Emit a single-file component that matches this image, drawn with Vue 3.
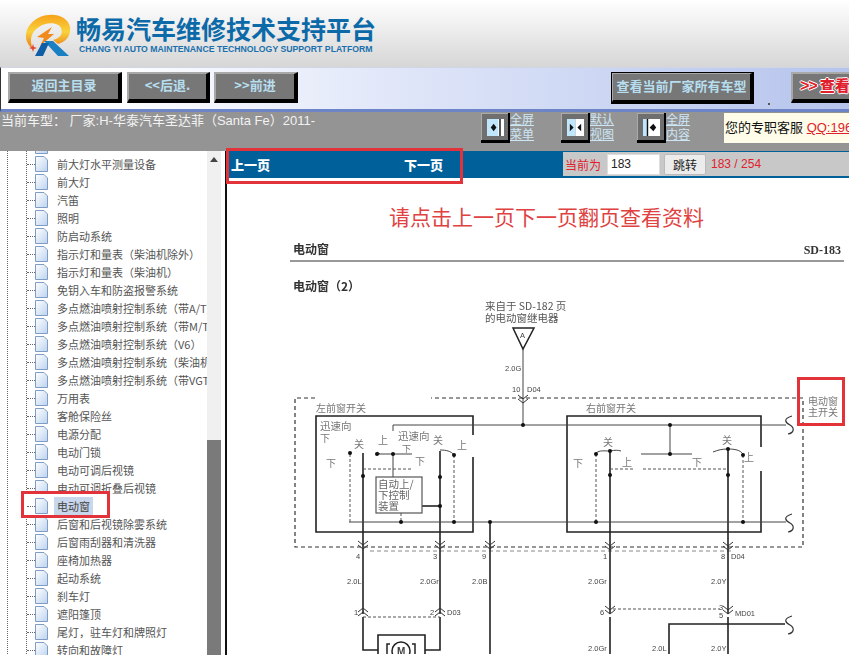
<script setup>
const treeRows = [
  '', '前大灯水平测量设备', '前大灯', '汽笛', '照明', '防启动系统', '指示灯和量表（柴油机除外）', '指示灯和量表（柴油机）',
  '免钥入车和防盗报警系统', '多点燃油喷射控制系统（带A/T）', '多点燃油喷射控制系统（带M/T）', '多点燃油喷射控制系统（V6）',
  '多点燃油喷射控制系统（柴油机）', '多点燃油喷射控制系统（带VGT）', '万用表', '客舱保险丝', '电源分配', '电动门锁',
  '电动可调后视镜', '电动可调折叠后视镜', '电动窗', '后窗和后视镜除雾系统', '后窗雨刮器和清洗器', '座椅加热器',
  '起动系统', '刹车灯', '遮阳篷顶', '尾灯，驻车灯和牌照灯', '转向和故障灯'
]
const thick = [
  'M473 436V417H316V533H473V458', 'M761 448V417H567V533H761V472',
  'M490 523V655', 'M363 454V615', 'M440 452V615', 'M610 452V615M610 618V655', 'M728 450V615M728 618V655',
  'M363 618V651H378', 'M440 618V651H425', 'M422 507H440', 'M669 655V625H785',
  'M378 655V636H425V655'
]
const thin = [
  'M523 350V426', 'M393 432V426H786', 'M349 523H786', 'M377 455H412', 'M393 455V478',
  'M641 455H692', 'M670 426V455', 'M440 451C446 451 451 452 454 456', 'M596 454C600 451 604 452 610 452',
  'M728 450C735 450 740 451 743 455', 'M713 453C718 451 722 450 728 450', 'M610 452C615 451 618 451 621 452',
  'M377 453L380 455'
]
const dashed = [
  'M350 455V523', 'M454 456V523', 'M401 514V523', 'M596 455V523', 'M743 456V523',
  'M363 470H412', 'M610 470H635', 'M643 470H727', 'M363 618H440', 'M613 610H720'
]
const nodes = [
  [523, 426], [670, 426], [363, 477], [393, 455], [350, 454], [377, 455], [440, 478], [440, 507], [401, 523], [454, 523],
  [454, 456], [490, 523], [610, 476], [596, 523], [670, 455], [728, 476], [743, 523], [610, 452], [596, 455], [728, 450], [743, 456]
]
const chevronsDown = [[523, 400, true], [363, 546], [440, 546], [490, 546], [610, 547], [728, 547], [610, 611], [728, 611]]
const chevronsUp = [[363, 613], [440, 613]]
const squiggles = [[787, 426], [787, 524], [787, 626]]
const cjkLabels = [
  ['左前窗开关', 316, 413, 10], ['右前窗开关', 586, 413, 10], ['迅速向', 320, 431, 10.5], ['下', 320, 443, 10],
  ['关', 354, 449, 10], ['上', 378, 445, 10], ['迅速向', 398, 441, 10.5], ['下', 402, 453, 9],
  ['关', 433, 445, 10], ['上', 457, 450, 10], ['下', 326, 468, 10], ['下', 415, 466, 10],
  ['关', 603, 447, 10], ['上', 622, 467, 10], ['下', 573, 468, 10], ['下', 692, 467, 10], ['关', 722, 445, 10], ['上', 744, 462, 10]
]
const latinLabels = [
  ['2.0G', 505, 372], ['10', 512, 393], ['D04', 527, 393], ['4', 356, 560], ['3', 433, 560], ['9', 482, 560],
  ['2.0L', 347, 585], ['2.0Gr', 420, 585], ['2.0B', 472, 585], ['1', 354, 616], ['2', 430, 616], ['D03', 447, 616],
  ['1', 603, 560], ['8', 721, 560], ['D04', 731, 560], ['2.0Gr', 588, 585], ['2.0Y', 711, 585], ['6', 600, 616],
  ['3', 719, 611], ['5', 719, 619], ['MD01', 735, 617], ['2.0Gr', 588, 652], ['2.0L', 652, 652], ['2.0Y', 711, 652]
]
</script>

<template>
  <div class="page">
    <header class="brand">
      <svg class="logo" viewBox="0 0 50 45" aria-hidden="true">
        <defs>
          <linearGradient id="ring" x1="0" y1="0" x2="0" y2="1">
            <stop offset="0" stop-color="#f7a21b" />
            <stop offset=".5" stop-color="#f9d23c" />
            <stop offset="1" stop-color="#e9771a" />
          </linearGradient>
        </defs>
        <path fill="url(#ring)" d="M8 36C-3 28-1 13 13 5C25-1 42 1 45 14C46 22 42 29 33 31L28 27C36 25 38 20 36 15C33 9 21 9 14 14C6 19 4 27 8 36Z" />
        <path fill="#f08a1d" d="M12 24L27 14L23 21L29 21L15 33L19 25Z" />
        <path fill="#1a80c4" d="M19 28L28 28L44 43L33 43Z" />
        <path fill="#0f5ea6" d="M10 43L17 30L24 30L18 43Z" />
        <path fill="#e2482a" d="M8 31L9 34L12 35L9 36L8 39L7 36L4 35L7 34Z" />
      </svg>
      <div class="brand-text">
        <div class="brand-cn">畅易汽车维修技术支持平台</div>
        <div class="brand-en">CHANG YI AUTO MAINTENANCE TECHNOLOGY SUPPORT PLATFORM</div>
      </div>
    </header>

    <nav class="nav">
      <button class="bevel b1">返回主目录</button>
      <button class="bevel b2">&lt;&lt;后退.</button>
      <button class="bevel b3">&gt;&gt;前进</button>
      <button class="bevel b4">查看当前厂家所有车型</button>
      <i class="speck"></i>
      <button class="bevel b5"><b class="arrows">&gt;&gt;</b><b>查看</b></button>
    </nav>

    <section class="status">
      <div class="model">当前车型： 厂家:H-华泰汽车圣达菲（Santa Fe）2011-</div>
      <div class="view v1">
        <span class="vicon"><svg viewBox="0 0 18 18"><rect width="18" height="18" fill="#bfe6fb" /><rect x="12" width="6" height="18" fill="#fff" /><rect x="13" width="1.5" height="18" fill="#111" /><path d="M7 5L4 9L7 13L10 9Z" fill="#111" /></svg></span>
        <a>全屏<br />菜单</a>
      </div>
      <div class="view v2">
        <span class="vicon"><svg viewBox="0 0 18 18"><rect width="9" height="18" fill="#bfe6fb" /><rect x="9" width="9" height="18" fill="#fff" /><path d="M3 5L7 9L3 13ZM15 5L11 9L15 13Z" fill="#111" /></svg></span>
        <a>默认<br />视图</a>
      </div>
      <div class="view v3">
        <span class="vicon"><svg viewBox="0 0 18 18"><rect width="18" height="18" fill="#fff" /><rect width="5" height="18" fill="#bfe6fb" /><rect x="4" width="1.5" height="18" fill="#111" /><path d="M11 5L7 9L11 13L14 9Z" fill="#111" /></svg></span>
        <a>全屏<br />内容</a>
      </div>
      <div class="service">您的专职客服 <a>QQ:1963</a></div>
    </section>

    <main class="body">
      <aside class="tree">
        <div class="tree-mark"></div>
        <div v-for="(row, i) in treeRows" :key="i" class="row" :class="{ active: row === '电动窗' }">
          <svg class="doc" viewBox="0 0 13 16" aria-hidden="true">
            <defs>
              <linearGradient id="docfill" x1="0" y1="0" x2="1" y2="1">
                <stop offset="0" stop-color="#ffffff" />
                <stop offset="1" stop-color="#bcd3ef" />
              </linearGradient>
            </defs>
            <path d="M.5.5H9L12.5 4V15.5H.5Z" fill="url(#docfill)" stroke="#7f9cc6" />
          </svg>
          <span class="label">{{ row }}</span>
        </div>
      </aside>
      <div class="scroll">
        <span class="arrow"></span>
        <span class="thumb"></span>
      </div>
      <div class="split"></div>

      <section class="content">
        <div class="pager">
          <div class="pager-links"><b>上一页</b><b>下一页</b></div>
          <div class="jump">
            <span class="red">当前为</span>
            <input class="page-input" value="183" />
            <button class="go">跳转</button>
            <span class="red count">183 / 254</span>
          </div>
        </div>
        <h1 class="notice">请点击上一页下一页翻页查看资料</h1>
        <svg class="diagram" viewBox="227 233 622 422" aria-label="电动窗电路图">
          <text class="head" x="293" y="255">电动窗</text>
          <text class="head latin" x="841" y="255" text-anchor="end">SD-183</text>
          <path d="M290 262H844" stroke="#333" stroke-width="1" />
          <text class="head" x="293" y="292">电动窗（2）</text>
          <text class="small" x="485" y="311">来自于 SD-182 页</text>
          <text class="small" x="485" y="323">的电动窗继电器</text>
          <path d="M513 329H534L523 350Z" fill="#fff" stroke="#222" stroke-width="1.5" />
          <text class="tiny" x="520" y="339">A</text>

          <path d="M315 399H295V548H803V399H431" fill="none" stroke="#333" stroke-width="1.2" stroke-dasharray="4 3" />
          <path d="M370 552H733" stroke="#888" stroke-width="1" stroke-dasharray="4 3" />

          <path v-for="d in thick" :key="d" :d="d" fill="none" stroke="#222" stroke-width="1.6" />
          <path v-for="d in thin" :key="d" :d="d" fill="none" stroke="#444" stroke-width="1" />
          <path v-for="d in dashed" :key="d" :d="d" fill="none" stroke="#555" stroke-width="1" stroke-dasharray="3 2" />
          <circle v-for="n in nodes" :key="n.join()" :cx="n[0]" :cy="n[1]" r="2" fill="#111" />

          <rect x="376" y="478" width="46" height="36" fill="#fff" stroke="#555" stroke-width="1.2" />
          <text class="box" x="378" y="489">自动上/</text>
          <text class="box" x="378" y="500">下控制</text>
          <text class="box" x="378" y="511">装置</text>

          <path v-for="c in chevronsDown" :key="'d' + c.join()" :d="`M${c[0] - 5} ${c[1] - 4}L${c[0]} ${c[1]}L${c[0] + 5} ${c[1] - 4}M${c[0] - 5} ${c[1]}L${c[0]} ${c[1] + 4}L${c[0] + 5} ${c[1]}`" fill="none" stroke="#333" />
          <path v-for="c in chevronsUp" :key="'u' + c.join()" :d="`M${c[0] - 5} ${c[1]}L${c[0]} ${c[1] - 4}L${c[0] + 5} ${c[1]}M${c[0] - 5} ${c[1] + 4}L${c[0]} ${c[1]}L${c[0] + 5} ${c[1] + 4}`" fill="none" stroke="#333" />
          <path v-for="s in squiggles" :key="'s' + s[1]" :d="`M${s[0] + 5} ${s[1] - 9}C${s[0] - 5} ${s[1] - 6} ${s[0] - 1} ${s[1] - 2} ${s[0] + 3} ${s[1]}C${s[0] + 8} ${s[1] + 3} ${s[0] + 7} ${s[1] + 8} ${s[0] + 1} ${s[1] + 9}`" fill="none" stroke="#333" stroke-width="1.2" />

          <text v-for="l in cjkLabels" :key="l.join()" class="lbl" :x="l[1]" :y="l[2]" :font-size="l[3]">{{ l[0] }}</text>
          <text v-for="l in latinLabels" :key="l.join()" class="tiny" :x="l[1]" :y="l[2]">{{ l[0] }}</text>

          <circle cx="401" cy="652" r="9" fill="#fff" stroke="#222" stroke-width="1.5" />
          <text class="tiny bold" x="397" y="656">M</text>
          <path d="M390 645H387V655M412 645H415V655" fill="none" stroke="#222" stroke-width="1.5" />

          <text class="lbl" x="808" y="406" font-size="10">电动窗</text>
          <text class="lbl" x="808" y="417" font-size="10">主开关</text>
        </svg>
      </section>
    </main>

    <div class="mark mark-pager"></div>
    <div class="mark mark-switch"></div>
  </div>
</template>

<style scoped>
.page {
  position: relative;
  width: 849px;
  height: 655px;
  overflow: hidden;
  background: #fff;
  font-family: "Liberation Sans", "Noto Sans CJK SC", sans-serif;
}
.brand {
  display: flex;
  align-items: flex-start;
  height: 67px;
  padding: 13px 0 0 25px;
  box-sizing: border-box;
  background: linear-gradient(#fff, #d6d6d6);
}
.logo { width: 50px; height: 45px; flex: none; }
.brand-text { margin-left: 1px; }
.brand-cn {
  font: 700 25px/31px "Noto Sans CJK SC", sans-serif;
  color: #0c6aa8;
  white-space: nowrap;
}
.brand-en {
  margin: 0 0 0 3px;
  font: 700 8.7px/11px "Liberation Sans", sans-serif;
  color: #1a70ad;
  white-space: nowrap;
}
.nav {
  position: relative;
  display: flex;
  align-items: flex-start;
  height: 45px;
  box-sizing: border-box;
  padding: 4px 0 0 8px;
  background: linear-gradient(90deg, #fff 0, #fff 12%, #dde4f8 50%, #b6c4ec 100%);
  border-top: 1px solid #d0d6e6;
  border-bottom: 3px solid #6d85c6;
  border-left: 1px solid #333;
}
.bevel {
  box-sizing: border-box;
  height: 31px;
  padding: 0 0 3px;
  flex: none;
  border-width: 2px 4px 4px 2px;
  border-style: solid;
  border-color: #a8a8a8 #000 #000 #a8a8a8;
  background: #777;
  color: #b6deef;
  font: 700 13px/20px "Noto Sans CJK SC", sans-serif;
  white-space: nowrap;
}
.b1 { width: 114px; margin-left: -1px; }
.b2 { width: 83px; margin-left: 5px; }
.b3 { width: 84px; margin-left: 4px; }
.b4 {
  width: 143px;
  margin-left: 313px;
  height: 32px;
  outline: 1px solid #000;
  outline-offset: -1px;
}
.speck {
  flex: none;
  width: 2px;
  height: 2px;
  margin: 31px 0 0 14px;
  background: #555;
}
.b5 {
  width: 70px;
  margin-left: 21px;
  text-align: left;
  padding-left: 7px;
}
.b5 b {
  color: #e0202c;
  font-size: 15px;
  text-shadow: 1px 0 #fff, -1px 0 #fff, 0 1px #fff, 0 -1px #fff;
}
.b5 .arrows { font: 700 16px/20px "Liberation Sans", sans-serif; letter-spacing: -1px; margin-right: 3px; }
.status {
  position: relative;
  height: 39px;
  background: #949494;
  color: #f2f2f2;
  font-size: 13px;
}
.model {
  position: absolute;
  left: 1px;
  top: 0;
  line-height: 17px;
  white-space: nowrap;
}
.view { position: absolute; top: 1px; display: flex; font-size: 12px; }
.v1 { left: 481px; }
.v2 { left: 561px; }
.v3 { left: 637px; }
.view a {
  color: #cde6f6;
  text-decoration: underline;
  line-height: 15px;
}
.vicon {
  box-sizing: border-box;
  width: 29px;
  height: 30px;
  padding: 6px 4px 4px 6px;
  border-width: 0 2px 3px 0;
  border-style: solid;
  border-color: #000;
  background: #6f6f6f;
  box-shadow: inset 1px 1px 0 #aaa;
}
.vicon svg { display: block; width: 100%; height: 100%; }
.service {
  position: absolute;
  left: 724px;
  top: 1px;
  width: 125px;
  height: 30px;
  padding-left: 1px;
  box-sizing: border-box;
  background: #fffde9;
  color: #111;
  line-height: 30px;
  white-space: nowrap;
  overflow: hidden;
}
.service a { color: #e0202c; text-decoration: underline; }
.body { display: flex; height: 504px; }
.tree {
  position: relative;
  flex: none;
  width: 207px;
  overflow: hidden;
  background-image:
    linear-gradient(#666 50%, transparent 50%),
    linear-gradient(#666 50%, transparent 50%);
  background-size: 1px 2px;
  background-position: 7px 0, 26px 0;
  background-repeat: repeat-y;
}
.tree-mark {
  position: absolute;
  left: 21px;
  top: 340px;
  width: 89px;
  height: 27px;
  box-sizing: border-box;
  border: 3px solid #e2323a;
  background: #fff;
  z-index: 1;
}
.row {
  position: relative;
  display: flex;
  align-items: center;
  height: 18px;
  margin-left: 27px;
  font: 11px/18px "Noto Sans CJK SC", sans-serif;
  color: #555;
  white-space: nowrap;
}
.tree-mark + .row { margin-top: -14px; }
.row::before {
  content: "";
  width: 8px;
  flex: none;
  border-top: 1px dotted #666;
}
.active { z-index: 2; }
.active .label { background: #c8d7ec; box-shadow: -3px 0 0 #c8d7ec, 3px 0 0 #c8d7ec; color: #444; }
.doc { flex: none; width: 13px; height: 16px; margin-right: 9px; }
.label { display: block; }
.scroll {
  position: relative;
  flex: none;
  width: 14px;
  background: #f0f0f0;
}
.arrow {
  position: absolute;
  left: 3px;
  top: 6px;
  border: 4px solid transparent;
  border-top: 0;
  border-bottom: 5px solid #444;
}
.thumb {
  position: absolute;
  left: 0;
  right: 0;
  top: 289px;
  bottom: 0;
  background: #7a7a7a;
}
.split {
  flex: none;
  width: 2px;
  margin-left: 4px;
  background: #111;
}
.content { flex: 1; min-width: 0; position: relative; }
.pager {
  display: flex;
  height: 27px;
  box-sizing: border-box;
  padding-top: 1px;
  background: #00609a;
}
.pager-links {
  flex: none;
  display: flex;
  width: 336px;
  padding: 3px 0 0 4px;
  box-sizing: border-box;
  gap: 134px;
  color: #fff;
  font: 700 13px/19px "Noto Sans CJK SC", sans-serif;
}
.jump {
  flex: 1;
  display: flex;
  align-items: center;
  height: 24px;
  padding-left: 2px;
  background: #c8c8c8;
  font-size: 12px;
}
.red { color: #e0202c; white-space: nowrap; }
.page-input {
  box-sizing: border-box;
  width: 53px;
  height: 21px;
  margin-left: 6px;
  padding: 0 3px;
  border: 1px solid #ddd;
  background: #fff;
  font: 12px "Liberation Sans", sans-serif;
  color: #222;
}
.go {
  box-sizing: border-box;
  width: 42px;
  height: 21px;
  margin-left: 4px;
  padding: 0;
  border: 1px solid #bbb;
  border-radius: 2px;
  background: #ececec;
  font: 12px "Noto Sans CJK SC", sans-serif;
  color: #222;
}
.count { margin-left: 5px; }
.notice {
  margin: 0;
  height: 54px;
  padding: 23px 0 0 162px;
  box-sizing: border-box;
  font: 400 21px/30px "Noto Sans CJK SC", sans-serif;
  color: #e04242;
  white-space: nowrap;
}
.diagram {
  display: block;
  width: 622px;
  height: 422px;
  filter: blur(.35px);
}
.diagram text { font-family: "Noto Sans CJK SC", sans-serif; }
.diagram .head { font-size: 12px; font-weight: 700; fill: #333; }
.diagram .latin { font-family: "Liberation Serif", serif; }
.diagram .small { font-size: 10.5px; fill: #555; }
.diagram .box { font-size: 10.5px; fill: #666; }
.diagram .lbl { fill: #777; }
.diagram .tiny { font-family: "Liberation Sans", sans-serif; font-size: 7.5px; fill: #444; }
.diagram .bold { font-weight: 700; font-size: 10px; }
.mark {
  position: absolute;
  box-sizing: border-box;
  border: 3px solid #e2323a;
  pointer-events: none;
}
.mark-pager { left: 226px; top: 148px; width: 237px; height: 36px; }
.mark-switch { left: 797px; top: 377px; width: 48px; height: 49px; }
</style>
